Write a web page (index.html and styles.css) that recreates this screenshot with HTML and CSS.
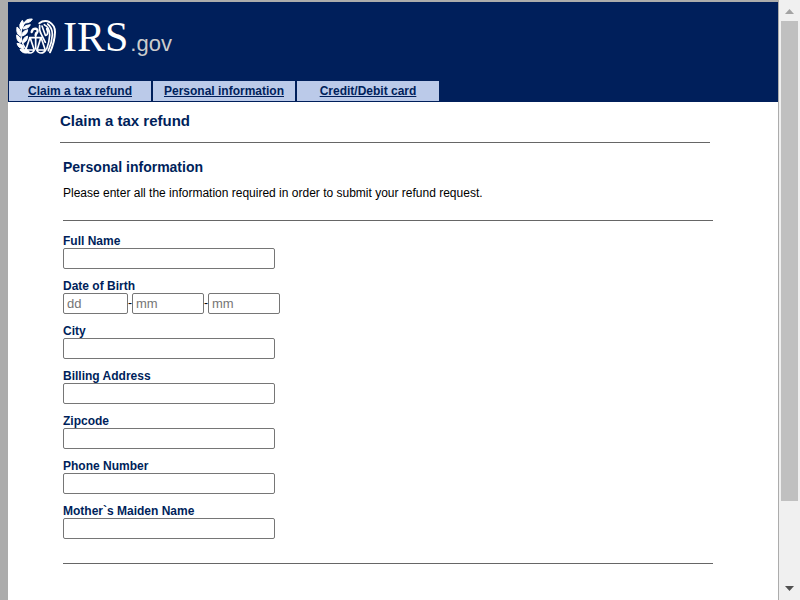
FILE: index.html
```html
<!DOCTYPE html>
<html lang="en">
<head>
<meta charset="utf-8">
<title>Claim a tax refund</title>
<link rel="stylesheet" href="styles.css">
</head>
<body>
<div class="window">
  <div class="page">
    <header class="banner">
      <div class="brand">
        <svg class="seal" viewBox="14 25 126 114" aria-hidden="true">
          <g fill="#fff" stroke="#fff" stroke-width="3" stroke-linejoin="round">
            <path d="M42 40Q46 27 66 28Q61 40 42 40zM30 58Q24 44 36 32Q45 45 33 58zM38 56Q44 45 60 45Q56 57 38 58zM27 78Q17 70 20 52Q33 61 31 78zM34 77Q36 64 52 60Q52 74 35 79zM30 99Q18 94 19 76Q32 82 33 97zM37 98Q37 84 52 79Q53 93 38 101zM38 117Q23 115 20 101Q36 101 41 115zM56 129Q38 134 29 120Q45 114 57 127z"/>
          </g>
          <g fill="none" stroke="#fff" stroke-linecap="round" stroke-linejoin="round">
            <path stroke-width="4" d="M45 38Q31 53 32 75Q32 106 56 127"/>
            <path stroke-width="7" d="M64 67Q66 57 76 57Q84 60 81 67L76 76"/>
            <path stroke-width="5" d="M76 70V118M58 84H94M58 86L47 119M60 86L71 119M91 86L81 119M93 86L104 119"/>
            <path stroke-width="5" d="M46 121H72Q68 130 59 130Q50 130 46 121zM79 121H106Q101 130 92 130Q83 130 79 121z"/>
            <path stroke-width="6" d="M87 41Q101 30 117 37Q134 47 134 67Q133 98 119 128"/>
            <path stroke-width="5" d="M88 48Q86 63 93 74L105 98M95 49L105 77Q112 78 112 66L109 57M102 45Q118 52 118 76Q117 98 109 118M112 43Q126 54 126 75Q125 98 114 123"/>
          </g>
        </svg>
        <span class="brand-name">IRS</span><span class="brand-suffix">.gov</span>
      </div>
      <nav class="tabs">
        <a href="#claim">Claim a tax refund</a>
        <a href="#personal">Personal information</a>
        <a href="#card">Credit/Debit card</a>
      </nav>
    </header>
    <main class="content">
      <h1>Claim a tax refund</h1>
      <form class="details">
        <h2>Personal information</h2>
        <p>Please enter all the information required in order to submit your refund request.</p>
        <div class="fields">
          <div class="field"><label for="name">Full Name</label><input id="name" type="text"></div>
          <div class="field">
            <label for="day">Date of Birth</label>
            <div class="date">
              <input id="day" class="day" type="text" placeholder="dd"><span>-</span><input type="text" placeholder="mm" aria-label="Month of birth"><span>-</span><input type="text" placeholder="mm" aria-label="Year of birth">
            </div>
          </div>
          <div class="field"><label for="city">City</label><input id="city" type="text"></div>
          <div class="field"><label for="address">Billing Address</label><input id="address" type="text"></div>
          <div class="field"><label for="zip">Zipcode</label><input id="zip" type="text"></div>
          <div class="field"><label for="phone">Phone Number</label><input id="phone" type="text"></div>
          <div class="field"><label for="maiden">Mother`s Maiden Name</label><input id="maiden" type="text"></div>
        </div>
      </form>
    </main>
  </div>
  <div class="scrollbar" aria-hidden="true">
    <svg class="arrow" viewBox="0 0 18 10"><path fill="#a3a3a3" d="M0 10L9 0L18 10z"/></svg>
    <div class="track"><div class="thumb"></div></div>
    <svg class="arrow" viewBox="0 0 18 10"><path fill="#505050" d="M0 0H18L9 10z"/></svg>
  </div>
</div>
</body>
</html>
```
FILE: styles.css
```css
* {
  box-sizing: border-box;
}

body {
  margin: 0;
  background: #acacac;
  color: #000;
  font-family: "Liberation Sans", Arial, sans-serif;
  font-size: 12px;
  line-height: 14px;
}

.window {
  display: flex;
  min-height: 100vh;
}

.page {
  flex: 1;
  display: flex;
  flex-direction: column;
  padding: 2px 1px 0 8px;
}

.banner {
  background: #001f5b;
  padding: 14px 1px 1px;
}

.brand {
  display: flex;
  align-items: baseline;
  height: 65px;
  padding-left: 6px;
  color: #fff;
}

.seal {
  width: 42px;
  height: 38px;
  margin: 2px 6px 0 0;
  align-self: flex-start;
}

.brand-name {
  font-family: "Liberation Serif", "Times New Roman", serif;
  font-size: 42px;
  line-height: 42px;
}

.brand-suffix {
  margin-left: 2px;
  color: #ccc;
  font-size: 22px;
}

.tabs {
  display: flex;
  gap: 2px;
}

.tabs a {
  width: 142px;
  background: #bbcae9;
  color: #001f5b;
  font-weight: bold;
  line-height: 20px;
  text-align: center;
}

.content {
  flex: 1;
  background: #fff;
  padding: 10px 65px 36px 52px;
}

h1,
h2 {
  margin: 0;
  color: #001f5b;
  line-height: 18px;
}

h1 {
  font-size: 15px;
  padding-bottom: 12px;
  margin-right: 3px;
  border-bottom: 1px solid #666;
}

h2 {
  font-size: 14px;
}

.details {
  padding: 15px 0 0 3px;
}

p {
  margin: 10px 0 20px;
}

.fields {
  display: flex;
  flex-direction: column;
  gap: 10px;
  padding: 13px 0 24px;
  border-top: 1px solid #666;
  border-bottom: 1px solid #666;
}

.field label {
  display: block;
  color: #001f5b;
  font-weight: bold;
}

input {
  display: block;
  width: 212px;
  height: 21px;
  padding: 1px 3px;
  border: 1px solid #767676;
  border-radius: 2px;
  background: #fff;
  font-family: inherit;
  font-size: 13px;
}

input::placeholder {
  color: #757575;
}

.date {
  display: flex;
  line-height: 21px;
}

.date input {
  width: 72px;
}

.date .day {
  width: 65px;
}

.scrollbar {
  width: 21px;
  display: flex;
  flex-direction: column;
  align-items: center;
  padding: 9px 2px;
  background: #f0f0f0;
}

.arrow {
  width: 9px;
  height: 5px;
}

.track {
  flex: 1;
  width: 17px;
  padding: 7px 0;
}

.thumb {
  height: 86%;
  background: #c0c0c0;
}
```
